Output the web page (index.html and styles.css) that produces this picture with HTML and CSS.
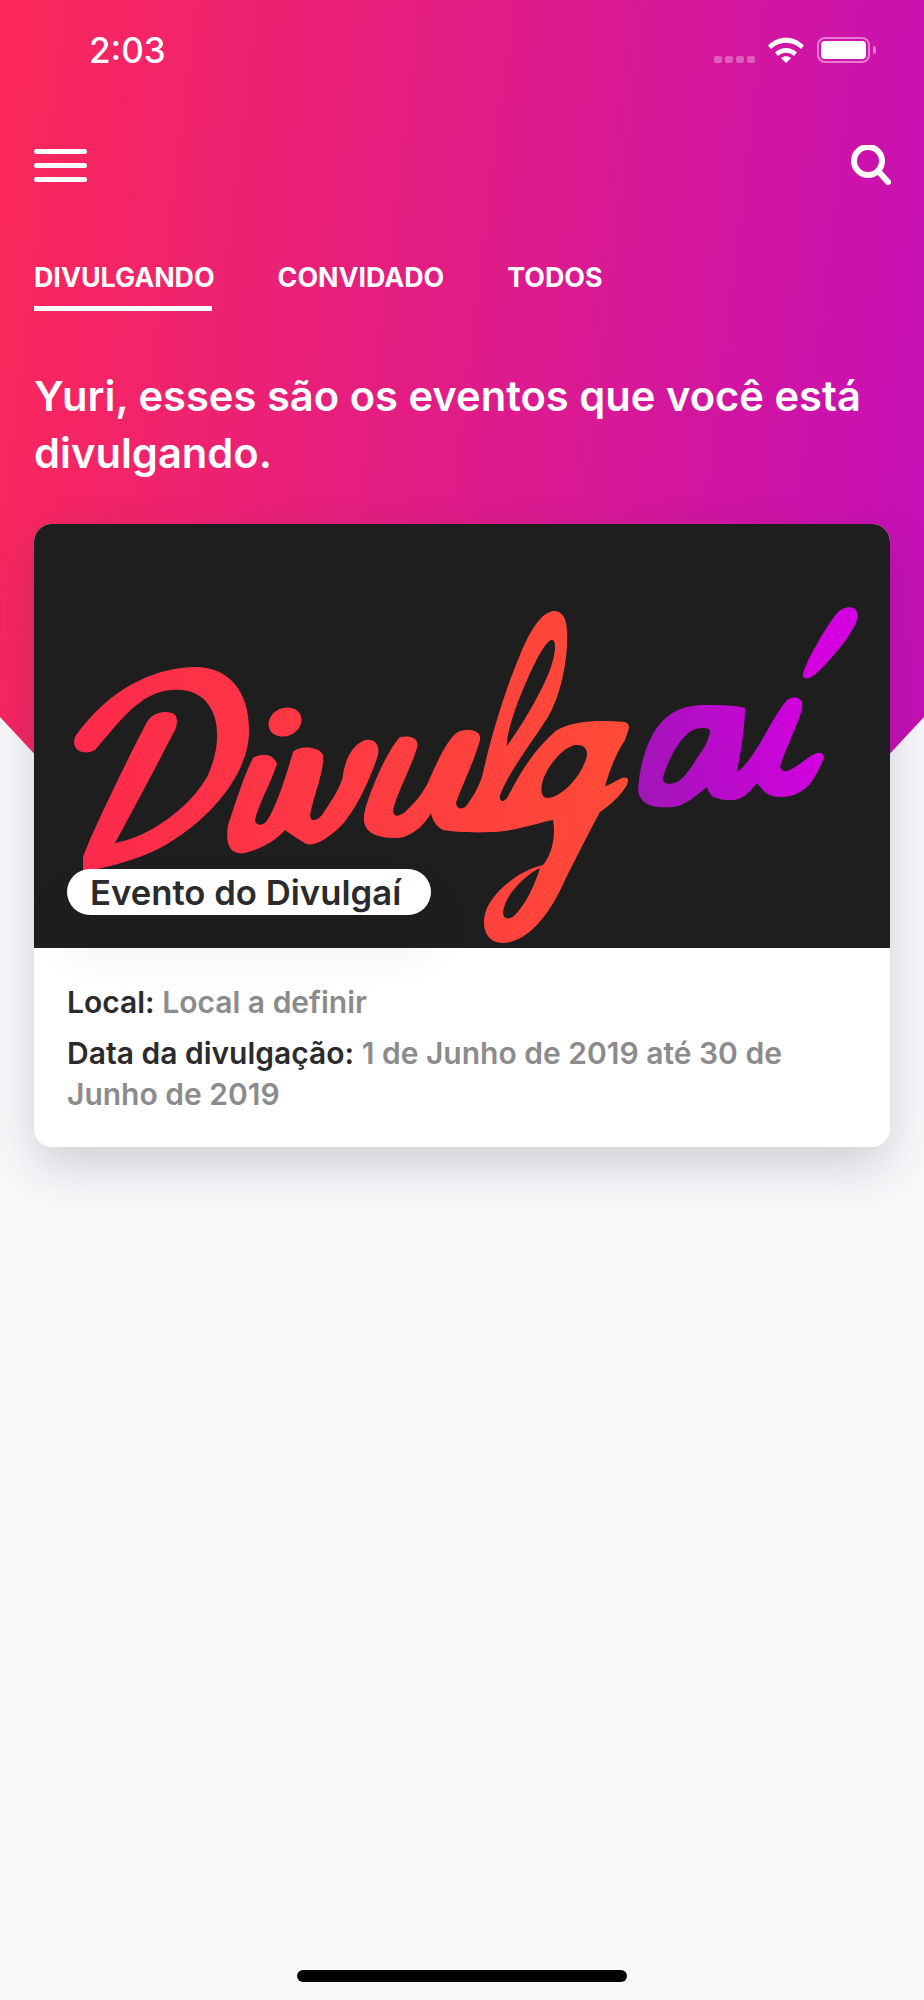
FILE: index.html
```html
<!DOCTYPE html>
<html>
  <head>
    <meta charset="utf-8">
    <title>Divulgaí</title>
    <link rel="stylesheet" href="styles.css">
  </head>
  <body>
    <div class="page">
      <header class="hero">
        <div class="status">
          <span class="time">2:03</span>
          <div class="status-icons">
            <div class="signal"><i></i><i></i><i></i><i></i></div>
            <svg class="wifi" width="36" height="26" viewBox="0 0 36 26">
              <path d="M0 8.5 C10 -2 26 -2 36 8.5 L33 12 C24.500 3.500 11.500 3.500 3 12 Z" fill="#fff"/>
              <path d="M7 15.500 C13 9.500 23 9.500 29 15.500 L26 19 C21.500 14.500 14.500 14.500 10 19 Z" fill="#fff"/>
              <path d="M13 21 C16 18.800 20 18.800 23 21 L18 26 Z" fill="#fff"/>
            </svg>
            <div class="battery"><div class="battery-level"></div></div>
            <div class="battery-cap"></div>
          </div>
        </div>

        <nav class="nav">
          <div class="burger"><i></i><i></i><i></i></div>
          <svg class="search" width="40" height="40" viewBox="0 0 40 40">
            <circle cx="17" cy="16" r="14" fill="none" stroke="#fff" stroke-width="6"/>
            <path d="M28 27 L37 37" fill="none" stroke="#fff" stroke-width="6" stroke-linecap="round"/>
          </svg>
        </nav>

        <div class="tabs">
          <a class="tab tab-active">DIVULGANDO</a>
          <a class="tab">CONVIDADO</a>
          <a class="tab">TODOS</a>
        </div>

        <h1 class="title">Yuri, esses são os eventos que você está divulgando.</h1>
      </header>

      <article class="card">
        <div class="card-image">
          <!-- logo artwork, page coordinates -->
          <svg class="logo" width="856" height="424" viewBox="34 524 856 424" role="img" aria-label="Logo Divulgaí">
            <defs>
              <linearGradient id="logo-red" gradientUnits="userSpaceOnUse" x1="80" y1="800" x2="630" y2="760">
                <stop offset="0" stop-color="#fd2a4c"/>
                <stop offset="1" stop-color="#ff4b37"/>
              </linearGradient>
              <linearGradient id="logo-purple" gradientUnits="userSpaceOnUse" x1="640" y1="780" x2="820" y2="740">
                <stop offset="0" stop-color="#a215b8"/>
                <stop offset="1" stop-color="#d400e0"/>
              </linearGradient>
            </defs>
            <g fill="url(#logo-red)" fill-rule="evenodd">
              <path d="M75 737 C87 720 125 670 193 667 C230 666 250 693 249 733 C248 776 207 823 160 848 C140 858 115 866 83 872 L83 857 C93 830 127 760 147 722 C152 713 163 710 172 713 C178 715 178 723 175 730 C163 753 137 803 115 843 C150 837 190 807 207 777 C220 750 220 723 210 707 C200 690 180 687 160 692 C133 700 113 730 95 750 C87 755 70 753 75 737 Z"/>
              <ellipse cx="285" cy="722" rx="17" ry="14" transform="rotate(-25 285 722)"/>
              <path d="M253 758 C262 752 274 754 277 764 C270 785 258 805 255 820 C256 826 262 826 266 822 C275 810 285 780 293 752 C298 746 318 745 323 755 C325 770 312 800 310 816 C311 823 318 820 322 815 C332 800 342 785 343 775 C345 760 352 745 365 740 C375 738 380 745 378 755 C370 780 352 820 333 833 C322 842 310 848 303 842 C295 837 289 833 285 830 C278 838 265 848 245 853 C230 855 225 845 228 825 C235 805 244 775 253 758 Z"/>
              <path d="M400 737 C410 735 420 738 417 748 C410 770 396 795 393 811 C394 818 400 816 405 812 C418 800 425 790 430 778 C438 760 448 738 458 732 C468 728 482 730 480 740 C474 762 460 790 456 803 C457 810 463 810 467 805 C474 795 480 785 483 773 C490 740 505 690 520 655 C530 630 543 610 555 611 C566 612 568 625 567 645 C565 680 555 705 548 717 C530 745 510 770 500 795 C499 802 503 803 507 798 C512 790 527 755 557 730 C575 720 600 720 625 722 C632 725 628 730 625 740 C615 755 610 770 605 786 C612 785 622 775 627 778 C632 782 618 800 600 812 C590 830 575 860 565 880 C552 910 530 942 503 943 C485 943 480 925 487 908 C495 890 520 870 543 865 C552 855 556 835 553 820 C540 822 515 832 490 832 C475 833 455 832 443 830 C435 826 432 818 431 813 C425 825 410 838 397 838 C372 838 360 830 365 810 C372 785 388 750 400 737 Z M552 640 C545 640 530 670 515 710 C510 725 506 740 507 746 C515 735 535 705 548 675 C556 655 557 640 552 640 Z M575 745 C585 744 590 750 585 762 C578 780 560 798 547 798 C540 798 540 785 545 775 C552 760 565 747 575 745 Z M540 868 C525 875 505 895 503 912 C503 920 510 920 515 915 C525 905 535 885 540 868 Z"/>
            </g>
            <g fill="url(#logo-purple)" fill-rule="evenodd">
              <path d="M638 790 C640 760 650 730 667 717 C680 706 695 705 707 705 C720 705 735 705 745 708 C745 730 740 755 737 772 C755 760 770 720 787 700 C795 695 804 698 802 708 C800 720 785 750 780 767 C782 772 786 772 790 770 C800 765 810 755 817 753 C823 752 825 756 823 760 C818 772 812 782 807 787 C797 795 790 797 780 797 C772 797 766 794 763 790 L757 783 C750 792 742 800 733 800 C722 801 715 797 713 797 C710 795 708 790 707 787 C697 795 685 806 673 807 C660 808 640 808 638 790 Z M663 777 C670 755 682 735 693 730 C700 727 711 727 710 732 C708 742 703 750 697 758 C690 770 682 780 677 782 C670 785 662 785 663 777 Z"/>
              <path d="M855 609 C858 612 858 618 856 623 C851 633 845 642 837 651 C829 661 818 673 811 677 C806 680 802 678 803 674 C805 666 811 654 817 644 C823 633 831 620 838 612 C843 607 851 606 855 609 Z"/>
            </g>
          </svg>
          <div class="badge">Evento do Divulgaí</div>
        </div>
        <div class="card-body">
          <p class="info"><b>Local:</b> Local a definir</p>
          <p class="info"><b>Data da divulgação:</b> 1 de Junho de 2019 até 30 de Junho de 2019</p>
        </div>
      </article>

      <div class="home-bar"></div>
    </div>
  </body>
</html>
```

FILE: styles.css
```css
html, body {
  height: 100%;
}
body {
  --gutter: 34px;
  --ink: #2b2b2e;
  --muted: #8b8b8d;

  margin: 0;
  overflow: hidden;
  background-color: #f8f9fb;
  font-family: Inter, "Liberation Sans", sans-serif;
}

.page {
  display: flex;
  flex-direction: column;
  height: 2000px;
}

/* gradient header, the card overlaps its lower part */
.hero {
  height: 760px;
  flex-shrink: 0;
  box-sizing: border-box;
  padding: 37px var(--gutter) 0;
  color: #fff;
  background: linear-gradient(97deg, #fc2858 0%, #c40fb8 100%);
  clip-path: polygon(0 0, 100% 0, 100% 717px, calc(100% - 40px) 760px, 40px 760px, 0 717px);
}

.status {
  display: flex;
  justify-content: space-between;
  height: 26px;
  padding: 0 14px 0 55px;
}
.time {
  font-size: 35px;
  line-height: 26px;
  font-weight: 500;
}
.status-icons {
  display: flex;
  align-items: flex-start;
}
.signal {
  display: flex;
  gap: 3px;
  margin: 19px 13px 0 0;
}
.signal i {
  width: 8px;
  height: 7px;
  border-radius: 2px;
  background-color: rgba(255, 255, 255, 0.3);
}
.wifi {
  margin-right: 13px;
}
.battery {
  box-sizing: border-box;
  width: 53px;
  height: 26px;
  padding: 2px;
  border: 2px solid rgba(255, 255, 255, 0.45);
  border-radius: 8px;
}
.battery-level {
  height: 100%;
  border-radius: 4px;
  background-color: #fff;
}
.battery-cap {
  width: 3px;
  height: 8px;
  margin: 9px 0 0 3px;
  border-radius: 0 3px 3px 0;
  background-color: rgba(255, 255, 255, 0.45);
}

.nav {
  display: flex;
  justify-content: space-between;
  align-items: center;
  height: 40px;
  margin-top: 82px;
  margin-right: -1px;
}
.burger {
  display: flex;
  flex-direction: column;
  gap: 9px;
  width: 53px;
}
.burger i {
  height: 5px;
  border-radius: 3px;
  background-color: #fff;
}

.tabs {
  display: flex;
  gap: 63px;
  margin-top: 77px;
}
.tab {
  font-size: 26.8px;
  line-height: 30px;
  font-weight: 700;
}
.tab-active::after {
  content: "";
  display: block;
  height: 5px;
  margin: 14px 3px 0 0;
  background-color: #fff;
}

.title {
  margin: 57px 0 0;
  font-size: 41.7px;
  line-height: 57px;
  font-weight: 600;
}

.card {
  position: relative;
  margin: -236px var(--gutter) 0;
  border-radius: 18px;
  background-color: #fff;
  box-shadow: 0 20px 50px rgba(40, 50, 60, 0.2);
}
.card-image {
  position: relative;
  height: 424px;
  border-radius: 18px 18px 0 0;
  background-color: #1e1e1e;
}
.logo {
  display: block;
}
.badge {
  position: absolute;
  left: 33px;
  bottom: 33px;
  height: 46px;
  padding: 0 30px 0 23px;
  border-radius: 23px;
  font-size: 34.7px;
  line-height: 46px;
  font-weight: 600;
  color: var(--ink);
  background-color: #fff;
  box-shadow: 0 30px 50px rgba(0, 0, 0, 0.09);
}

.card-body {
  padding: 34px 33px 32px;
}
.info {
  margin: 0 0 10px;
  font-size: 30px;
  line-height: 41px;
  font-weight: 600;
  color: var(--muted);
}
.info:last-child {
  margin-bottom: 0;
}
.info b {
  font-weight: 600;
  color: var(--ink);
}

.home-bar {
  width: 330px;
  height: 12px;
  margin: auto auto 18px;
  border-radius: 6px;
  background-color: #000;
}
```
